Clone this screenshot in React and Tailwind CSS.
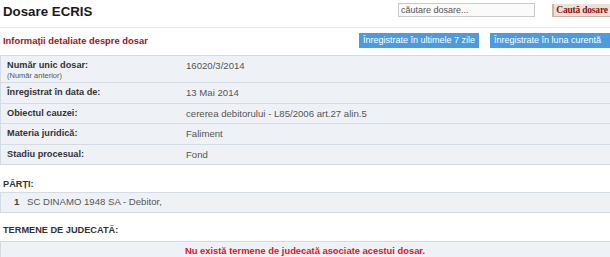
export default function App() {
    const rows = [
        { label: "Număr unic dosar:", sub: "(Număr anterior)", value: "16020/3/2014" },
        { label: "Înregistrat în data de:", value: "13 Mai 2014" },
        { label: "Obiectul cauzei:", value: "cererea debitorului - L85/2006 art.27 alin.5" },
        { label: "Materia juridică:", value: "Faliment" },
        { label: "Stadiu procesual:", value: "Fond" },
    ]

    return (
        <div className="w-[610px] h-[257px] overflow-hidden bg-white font-['Liberation_Sans',Arial,sans-serif]">

            {/* header */}
            <div className="h-[28px] flex items-start justify-between border-b border-[#e8e8e8]">
                <h1 className="pl-[3px] pt-[4px] text-[13.3px] font-bold text-[#1a1a1a] leading-[16px]">
                    Dosare ECRIS
                </h1>
                <div className="flex items-start pt-[3px]">
                    <input
                        placeholder="căutare dosare..."
                        className="w-[137px] h-[14px] border border-[#c9c9c9] bg-[#fafafa] px-[2px] text-[9px] text-[#555] placeholder:text-[#555] outline-none"
                    />
                    <button className="ml-[17px] mt-[1px] w-[58px] h-[13px] bg-[#ece1d6] border-l-2 border-b border-[#c9b8a8] text-[9.5px] font-bold text-[#8e1212] leading-[12px] font-['Liberation_Serif',serif] tracking-[-0.2px]">
                        Caută dosare
                    </button>
                </div>
            </div>

            {/* subheader */}
            <div className="h-[25px] flex items-start justify-between">
                <h2 className="pl-[3px] pt-[7px] text-[9.4px] font-bold text-[#9c1420] leading-[11px]">
                    Informații detaliate despre dosar
                </h2>
                <div className="flex gap-[11px] pt-[5px]">
                    <button className="w-[120px] h-[15px] bg-[#4a9be0] text-white text-[9px] leading-[15px]">
                        Înregistrate în ultimele 7 zile
                    </button>
                    <button className="w-[120px] h-[15px] bg-[#4a9be0] text-white text-[9px] leading-[15px] text-left pl-[4px]">
                        Înregistrate în luna curentă
                    </button>
                </div>
            </div>

            {/* details table */}
            <div className="mt-[2px] w-[612px] border border-[#d3dbe4]">
                {rows.map((r, i) => (
                    <div
                        key={i}
                        className={
                            "flex bg-[#eef2f7] " +
                            (i > 0 ? "border-t border-[#d3dbe4] h-[20.5px] items-center" : "h-[26px] items-start pt-[4px]")
                        }
                    >
                        <div className="w-[185px] pl-[6px]">
                            <div className="text-[9.2px] font-bold text-[#333] leading-[11px]">{r.label}</div>
                            {r.sub && <div className="text-[7.5px] text-[#555] leading-[9px]">{r.sub}</div>}
                        </div>
                        <div className="text-[9.6px] text-[#555] leading-[11px]">{r.value}</div>
                    </div>
                ))}
            </div>

            {/* parti */}
            <div className="pl-[3px] pt-[14px] text-[9.2px] font-bold text-[#333] leading-[11px]">
                PĂRȚI:
            </div>
            <div className="mt-[2px] w-[612px] h-[21px] border border-[#d3dbe4] bg-[#eef2f7] flex items-center text-[9.6px] text-[#555]">
                <span className="pl-[13px] w-[26px] font-bold text-[#444]">1</span>
                <span>SC DINAMO 1948 SA - Debitor,</span>
            </div>

            {/* termene */}
            <div className="pl-[3px] pt-[12px] text-[9.2px] font-bold text-[#333] leading-[11px]">
                TERMENE DE JUDECATĂ:
            </div>
            <div className="mt-[5px] w-[612px] h-[18px] border border-[#d3dbe4] bg-[#eef2f7] flex items-center justify-center pr-[2px] text-[9.4px] font-bold text-[#e0141e] leading-[11px]">
                Nu există termene de judecată asociate acestui dosar.
            </div>

        </div>
    )
}
